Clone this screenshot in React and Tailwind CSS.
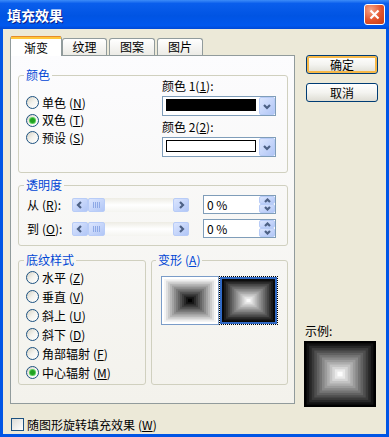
import React from "react";

const Key = ({ k }) => (
  <span className="ml-[3px]">
    (<u>{k}</u>)
  </span>
);

const Radio = ({ label, keyChar, checked, h = "h-[19px]" }) => {
  return (
    <div className={`flex items-center ${h}`}>
      <div className="w-[13px] h-[13px] rounded-full border border-[#1C5180] bg-linear-to-br from-[#D6D2C4] via-[#F4F3EE] to-white flex items-center justify-center">
        {checked && <div className="w-[5px] h-[5px] rounded-full bg-[#21A121] shadow-[0_0_0_1px_#5BD05B]" />}
      </div>
      <span className="ml-[3px] whitespace-nowrap">
        {label}
        <Key k={keyChar} />
      </span>
    </div>
  );
};

const Chevron = ({ d, w = 8, h = 8 }) => (
  <svg width={w} height={h} viewBox={`0 0 ${w} ${h}`}>
    <path d={d} stroke="#4D6185" strokeWidth="2.2" fill="none" />
  </svg>
);

const BlueBtn = ({ className, children }) => (
  <div className={`rounded-[2px] border border-[#B8CCF7] bg-linear-to-br from-[#DCE6FE] to-[#B1C6F6] flex items-center justify-center ${className}`}>
    {children}
  </div>
);

const ColorCombo = ({ color }) => (
  <div className="w-[114px] h-[20px] border border-[#7F9DB9] bg-white flex items-start">
    <div className={`ml-[3px] mt-[2px] w-[90px] h-[12px] border border-black ${color}`} />
    <BlueBtn className="ml-auto w-[16px] h-[18px]">
      <Chevron d="M1 2 L4 5 L7 2" h={7} />
    </BlueBtn>
  </div>
);

const Slider = () => (
  <div className="w-[117px] h-[14px] flex bg-linear-to-b from-[#EDECE4] via-white to-[#F4F4F0]">
    <BlueBtn className="w-[16px] h-[14px]">
      <Chevron d="M5 1 L2 4 L5 7" />
    </BlueBtn>
    <BlueBtn className="w-[17px] h-[14px] gap-[1px]">
      <div className="w-[1px] h-[6px] bg-[#8EA9E6]" />
      <div className="w-[1px] h-[6px] bg-[#8EA9E6]" />
      <div className="w-[1px] h-[6px] bg-[#8EA9E6]" />
      <div className="w-[1px] h-[6px] bg-[#8EA9E6]" />
    </BlueBtn>
    <div className="flex-1" />
    <BlueBtn className="w-[16px] h-[14px]">
      <Chevron d="M3 1 L6 4 L3 7" />
    </BlueBtn>
  </div>
);

const Spin = () => (
  <div className="w-[73px] h-[19px] border border-[#7F9DB9] bg-white flex items-start">
    <span className="ml-[3px] mt-[2px] leading-[14px]">0 %</span>
    <div className="ml-auto w-[16px] h-[17px] flex flex-col">
      <BlueBtn className="h-[8px]">
        <Chevron d="M1 4 L3.5 1.5 L6 4" w={7} h={5} />
      </BlueBtn>
      <BlueBtn className="h-[9px]">
        <Chevron d="M1 1 L3.5 3.5 L6 1" w={7} h={5} />
      </BlueBtn>
    </div>
  </div>
);

const Pyramid = ({ w, h, from, to, steps }) => {
  const rects = [];
  for (let i = 0; i < steps; i++) {
    const v = Math.round(from + ((to - from) * i) / (steps - 1));
    const x = (w / 2) * (i / steps);
    const y = (h / 2) * (i / steps);
    rects.push(
      <rect key={i} x={x} y={y} width={w - 2 * x} height={h - 2 * y} fill={`rgb(${v},${v},${v})`} />
    );
  }
  return (
    <svg width={w} height={h} className="block">
      {rects}
    </svg>
  );
};

const Legend = ({ children, ml = "ml-[5px]" }) => (
  <legend className={`${ml} px-[2px] leading-[14px] text-[#0046D5]`}>{children}</legend>
);

const Tab = ({ label, w }) => (
  <div className={`${w} h-[17px] rounded-t-[3px] border border-b-0 border-[#919B9C] bg-linear-to-b from-white to-[#ECEBE6] flex items-center justify-center`}>
    {label}
  </div>
);

const Button = ({ label, primary }) => (
  <div
    className={`w-[72px] h-[19px] rounded-[3px] border border-[#003C74] bg-linear-to-b from-white via-[#F4F4F0] to-[#DEDDD4] flex items-center justify-center ${
      primary ? "shadow-[inset_0_0_0_2px_#F6B848]" : ""
    }`}
  >
    {label}
  </div>
);

export default function App() {
  return (
    <div className="w-[389px] h-[437px] flex flex-col bg-[#0055E5] font-['Noto_Sans_CJK_SC','Noto_Sans',sans-serif] text-[12px] leading-[14px] text-black">
      <div className="h-[29px] flex items-center bg-[linear-gradient(180deg,#3D8CF8_0%,#0A5EEC_12%,#0054E3_55%,#0058EE_88%,#0049D6_100%)]">
        <span className="ml-[7px] text-white font-bold text-[14px] [text-shadow:1px_1px_#0A1E8A]">填充效果</span>
        <div className="ml-auto mr-[4px] w-[21px] h-[21px] rounded-[3px] border border-white bg-[radial-gradient(circle_at_30%_25%,#F6A487,#E2532C_55%,#C43C15)] flex items-center justify-center">
          <svg width="11" height="11" viewBox="0 0 11 11">
            <path d="M1.5 1.5 L9.5 9.5 M9.5 1.5 L1.5 9.5" stroke="white" strokeWidth="2.2" />
          </svg>
        </div>
      </div>

      <div className="flex-1 mx-[3px] mb-[3px] bg-[#ECE9D8] flex flex-col">
        <div className="flex">
          <div className="ml-[7px] mt-[7px] flex flex-col">
            <div className="h-[19px] flex items-end">
              <div className="relative z-10 w-[52px] h-[20px] -mb-px rounded-t-[3px] border-x border-[#919B9C] bg-white flex flex-col">
                <div className="h-[1px] bg-[#E68B2C] rounded-t-[3px]" />
                <div className="h-[2px] bg-[#FFC73C]" />
                <div className="flex-1 flex items-center justify-center">渐变</div>
              </div>
              <Tab label="纹理" w="w-[45px]" />
              <div className="w-[2px]" />
              <Tab label="图案" w="w-[46px]" />
              <div className="w-[2px]" />
              <Tab label="图片" w="w-[46px]" />
            </div>

            <div className="w-[285px] h-[349px] border border-[#919B9C] bg-linear-to-b from-[#FCFCFE] to-[#F3F2EC] pl-[7px] pt-[12px] flex flex-col">
              <fieldset className="w-[270px] h-[105px] border border-[#D0D0BF] rounded-[3px]">
                <Legend>颜色</Legend>
                <div className="flex">
                  <div className="w-[143px] pl-[7px] pt-[12px]">
                    <Radio label="单色" keyChar="N" h="h-[17.5px]" />
                    <Radio label="双色" keyChar="T" checked h="h-[17.5px]" />
                    <Radio label="预设" keyChar="S" h="h-[17.5px]" />
                  </div>
                  <div className="-mt-[2px] flex flex-col">
                    <div className="h-[12px] leading-[12px]">
                      颜色 1(<u>1</u>):
                    </div>
                    <div className="mt-[4px]">
                      <ColorCombo color="bg-black" />
                    </div>
                    <div className="mt-[5px] h-[12px] leading-[12px]">
                      颜色 2(<u>2</u>):
                    </div>
                    <div className="mt-[4px]">
                      <ColorCombo color="bg-white" />
                    </div>
                  </div>
                </div>
              </fieldset>

              <fieldset className="mt-[5px] w-[270px] h-[68px] border border-[#D0D0BF] rounded-[3px]">
                <Legend>透明度</Legend>
                <div className="pl-[8px] pt-[3px] flex flex-col gap-[5px]">
                  <div className="h-[19px] flex items-center">
                    <span className="w-[45px]">
                      从<Key k="R" />:
                    </span>
                    <Slider />
                    <div className="ml-[14px]">
                      <Spin />
                    </div>
                  </div>
                  <div className="h-[19px] flex items-center">
                    <span className="w-[45px]">
                      到<Key k="O" />:
                    </span>
                    <Slider />
                    <div className="ml-[14px]">
                      <Spin />
                    </div>
                  </div>
                </div>
              </fieldset>

              <div className="mt-[7px] flex gap-[5px]">
                <fieldset className="w-[128px] h-[132px] border border-[#D0D0BF] rounded-[3px]">
                  <Legend>底纹样式</Legend>
                  <div className="pl-[7px] pt-[1px]">
                    <Radio label="水平" keyChar="Z" />
                    <Radio label="垂直" keyChar="V" />
                    <Radio label="斜上" keyChar="U" />
                    <Radio label="斜下" keyChar="D" />
                    <Radio label="角部辐射" keyChar="F" />
                    <Radio label="中心辐射" keyChar="M" checked />
                  </div>
                </fieldset>
                <fieldset className="w-[137px] h-[132px] border border-[#D0D0BF] rounded-[3px]">
                  <Legend ml="ml-[4px]">
                    变形<Key k="A" />
                  </Legend>
                  <div className="pl-[9px] pt-[9px] flex">
                    <div className="w-[58px] h-[49px] border border-[#7A9CC8] bg-white p-[2px]">
                      <Pyramid w={52} h={43} from={244} to={0} steps={13} />
                    </div>
                    <div className="w-[59px] h-[49px] border border-dotted border-black">
                      <div className="w-full h-full border-2 border-[#316AC5]">
                        <Pyramid w={53} h={43} from={8} to={250} steps={13} />
                      </div>
                    </div>
                  </div>
                </fieldset>
              </div>
            </div>
          </div>

          <div className="ml-[11px] mt-[26px] flex flex-col">
            <Button label="确定" primary />
            <div className="mt-[9px]">
              <Button label="取消" />
            </div>
            <div className="mt-[222px] -ml-[1px]">示例:</div>
            <div className="mt-[3px] -ml-[2px] w-[72px] h-[66px]">
              <Pyramid w={72} h={66} from={0} to={252} steps={14} />
            </div>
          </div>
        </div>

        <div className="mt-[11px] ml-[8px] flex items-center h-[13px]">
          <div className="w-[13px] h-[13px] border border-[#1C5180] bg-linear-to-br from-[#DCDCD7] to-white" />
          <span className="ml-[3px]">
            随图形旋转填充效果<Key k="W" />
          </span>
        </div>
      </div>
    </div>
  );
}
